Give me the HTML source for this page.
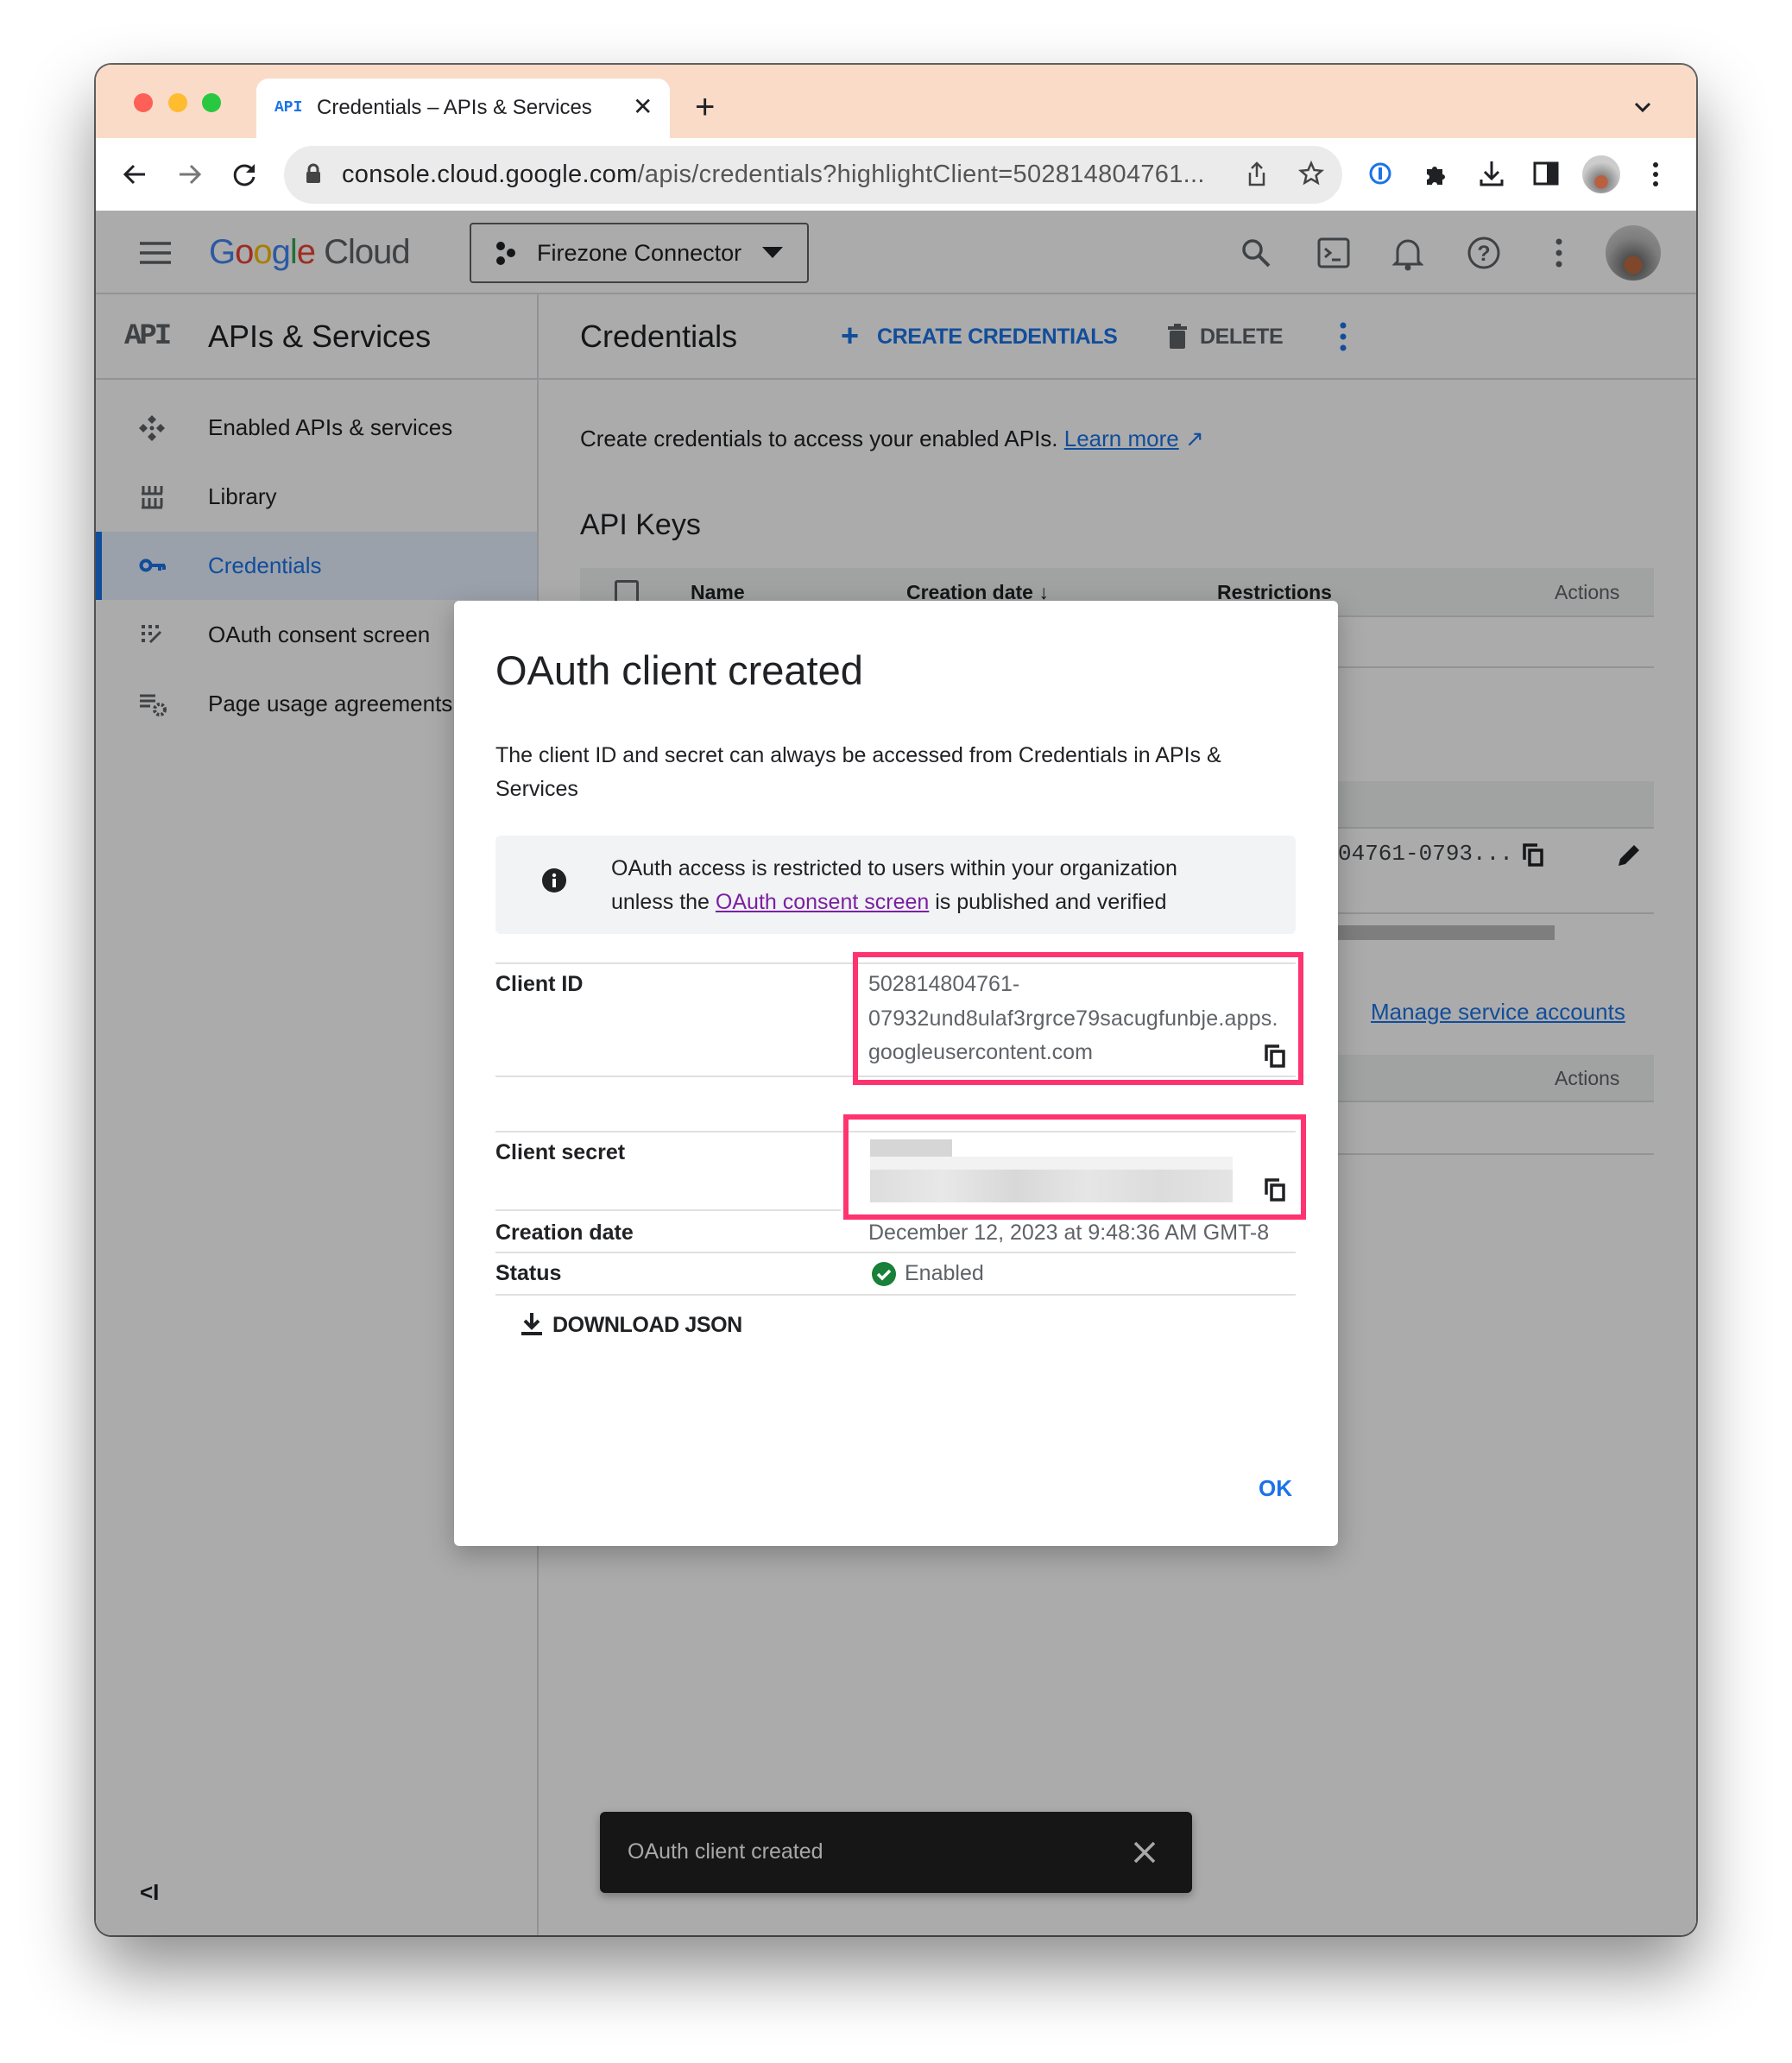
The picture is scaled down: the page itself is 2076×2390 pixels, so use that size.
<!DOCTYPE html>
<html><head><meta charset="utf-8"><style>
*{margin:0;padding:0;box-sizing:border-box}
body{width:2076px;height:2390px;background:#fff;position:relative;overflow:hidden;font-family:"Liberation Sans",Arial,sans-serif;color:#202124}
.a{position:absolute;white-space:nowrap}
.t{position:absolute;white-space:nowrap;line-height:40px}
.win{position:absolute;left:111px;top:75px;width:1854px;height:2167px;border-radius:18px;background:#fff;box-shadow:0 40px 80px rgba(0,0,0,.45),0 0 0 2px rgba(0,0,0,.6);overflow:hidden}
.side{font-size:26px;color:#202124}
.ico{position:absolute}
</style></head><body>
<div class="win"></div>
<!-- tab bar -->
<div class="a" style="left:111px;top:75px;width:1854px;height:85px;background:#fadbc8;border-radius:18px 18px 0 0"></div>
<div class="a" style="left:155px;top:108px;width:22px;height:22px;border-radius:50%;background:#fe5f57"></div>
<div class="a" style="left:195px;top:108px;width:22px;height:22px;border-radius:50%;background:#febc2e"></div>
<div class="a" style="left:234px;top:108px;width:22px;height:22px;border-radius:50%;background:#28c840"></div>
<div class="a" style="left:297px;top:91px;width:479px;height:70px;background:#fff;border-radius:14px 14px 0 0"></div>
<div class="t" style="left:318px;top:105px;font:bold 18px 'Liberation Mono',monospace;line-height:40px;color:#1a73e8">API</div>
<div class="t" style="left:367px;top:105px;font-size:24px;color:#202124">Credentials – APIs &amp; Services</div>
<div class="t" style="left:733px;top:104px;font-size:28px;color:#202124">✕</div>
<div class="t" style="left:805px;top:104px;font-size:40px;color:#202124">+</div>
<svg class="ico" style="left:1890px;top:115px" width="26" height="20"><path d="M5 5l8 8 8-8" stroke="#202124" stroke-width="3" fill="none"/></svg>
<!-- toolbar -->
<div class="a" style="left:111px;top:160px;width:1854px;height:84px;background:#fff"></div>
<svg class="ico" style="left:140px;top:186px" width="32" height="32"><path d="M28 16H6M15 6L5 16l10 10" stroke="#202124" stroke-width="3" fill="none"/></svg>
<svg class="ico" style="left:204px;top:186px" width="32" height="32"><path d="M4 16h22M17 6l10 10-10 10" stroke="#777" stroke-width="3" fill="none"/></svg>
<svg class="ico" style="left:268px;top:186px" width="32" height="32"><path d="M25 12A11 11 0 1 0 26 19" stroke="#202124" stroke-width="3" fill="none"/><path d="M27 4v10H17z" fill="#202124"/></svg>
<div class="a" style="left:329px;top:169px;width:1226px;height:67px;border-radius:34px;background:#ebebeb"></div>
<svg class="ico" style="left:353px;top:188px" width="20" height="26"><rect x="2" y="11" width="16" height="13" rx="2" fill="#444"/><path d="M5 12V8a5 5 0 0 1 10 0v4" stroke="#444" stroke-width="3" fill="none"/></svg>
<div class="t" style="left:396px;top:182px;font-size:29px;letter-spacing:0.3px;color:#202124">console.cloud.google.com<span style="color:#555">/apis/credentials?highlightClient=502814804761...</span></div>
<svg class="ico" style="left:1442px;top:186px" width="28" height="32"><path d="M14 3v16M8 9l6-6 6 6M6 14v14h16V14" stroke="#444" stroke-width="2.5" fill="none"/></svg>
<svg class="ico" style="left:1504px;top:186px" width="30" height="30"><path d="M15 3l3.5 8 8.5.8-6.4 5.6 2 8.4-7.6-4.5-7.6 4.5 2-8.4L3 11.8l8.5-.8z" stroke="#444" stroke-width="2.5" fill="none"/></svg>
<svg class="ico" style="left:1585px;top:187px" width="28" height="28"><circle cx="14" cy="14" r="11" stroke="#1a73e8" stroke-width="3" fill="none"/><rect x="12" y="7" width="4" height="14" fill="#1a73e8"/></svg>
<svg class="ico" style="left:1648px;top:186px" width="30" height="30"><path d="M5 10h6a3 3 0 0 1 6 0h6v6a3 3 0 0 1 0 6v6H17a3 3 0 0 0-6 0H5v-6a3 3 0 0 0 0-6z" fill="#202124"/></svg>
<svg class="ico" style="left:1712px;top:184px" width="32" height="34"><path d="M16 3v20M8 15l8 8 8-8M4 24v6h24v-6" stroke="#202124" stroke-width="3" fill="none"/></svg>
<svg class="ico" style="left:1776px;top:187px" width="30" height="28"><rect x="2" y="2" width="26" height="24" stroke="#202124" stroke-width="3" fill="none"/><rect x="16" y="2" width="12" height="24" fill="#202124"/></svg>
<div class="a" style="left:1833px;top:180px;width:44px;height:44px;border-radius:50%;background:radial-gradient(circle at 50% 70%,#b86040 0 20%,#888 21%,#ccc 60%)"></div>
<svg class="ico" style="left:1912px;top:186px" width="12" height="32"><circle cx="6" cy="5" r="3" fill="#202124"/><circle cx="6" cy="16" r="3" fill="#202124"/><circle cx="6" cy="27" r="3" fill="#202124"/></svg>

<!-- page -->
<div class="a" style="left:111px;top:244px;width:1854px;height:1998px;background:#fff;border-radius:0 0 18px 18px"></div>
<div class="a" style="left:111px;top:339px;width:1854px;height:2px;background:#dadce0"></div>
<div class="a" style="left:111px;top:438px;width:1854px;height:2px;background:#dadce0"></div>
<div class="a" style="left:622px;top:341px;width:2px;height:1901px;background:#dadce0"></div>
<svg class="ico" style="left:160px;top:278px" width="40" height="30"><path d="M2 4h36M2 15h36M2 26h36" stroke="#5f6368" stroke-width="3.5"/></svg>
<div class="t" style="left:242px;top:272px;font-size:40px;letter-spacing:-1px"><span style="color:#4285f4">G</span><span style="color:#ea4335">o</span><span style="color:#fbbc04">o</span><span style="color:#4285f4">g</span><span style="color:#34a853">l</span><span style="color:#ea4335">e</span> <span style="color:#5f6368">Cloud</span></div>
<div class="a" style="left:544px;top:258px;width:393px;height:70px;border:2px solid #5f6368;border-radius:4px"></div>
<svg class="ico" style="left:572px;top:278px" width="30" height="30"><circle cx="8" cy="7" r="5" fill="#202124"/><circle cx="20" cy="15" r="5" fill="#202124"/><circle cx="8" cy="24" r="5" fill="#202124"/></svg>
<div class="t" style="left:622px;top:273px;font-size:27px">Firezone Connector</div>
<svg class="ico" style="left:882px;top:285px" width="26" height="16"><path d="M1 1h24L13 14z" fill="#202124"/></svg>
<svg class="ico" style="left:1436px;top:274px" width="38" height="38"><circle cx="15" cy="15" r="10" stroke="#5f6368" stroke-width="3.5" fill="none"/><path d="M22 22l12 12" stroke="#5f6368" stroke-width="4"/></svg>
<svg class="ico" style="left:1526px;top:274px" width="38" height="38"><rect x="2" y="3" width="34" height="32" rx="3" stroke="#5f6368" stroke-width="3" fill="none"/><path d="M9 14l6 5-6 5M17 27h10" stroke="#5f6368" stroke-width="3" fill="none"/></svg>
<svg class="ico" style="left:1613px;top:272px" width="36" height="42"><path d="M6 31V19a12 12 0 0 1 24 0v12l3 3H3z" stroke="#5f6368" stroke-width="3" fill="none"/><circle cx="18" cy="38" r="3.5" fill="#5f6368"/></svg>
<svg class="ico" style="left:1699px;top:273px" width="40" height="40"><circle cx="20" cy="20" r="17" stroke="#5f6368" stroke-width="3" fill="none"/><text x="20" y="29" text-anchor="middle" font-size="25" font-family="Liberation Sans" font-weight="bold" fill="#5f6368">?</text></svg>
<svg class="ico" style="left:1800px;top:275px" width="12" height="36"><circle cx="6" cy="5" r="3.5" fill="#5f6368"/><circle cx="6" cy="18" r="3.5" fill="#5f6368"/><circle cx="6" cy="31" r="3.5" fill="#5f6368"/></svg>
<div class="a" style="left:1860px;top:261px;width:64px;height:64px;border-radius:50%;background:radial-gradient(circle at 50% 72%,#c06a40 0 18%,#777 19%,#bbb 55%,#ddd)"></div>

<div class="t" style="left:144px;top:370px;font:bold 34px 'Liberation Mono',monospace;line-height:40px;color:#5f6368;letter-spacing:-3px">API</div>
<div class="t" style="left:241px;top:370px;font-size:36px">APIs &amp; Services</div>
<div class="t" style="left:672px;top:370px;font-size:36px">Credentials</div>
<div class="t" style="left:974px;top:369px;font-size:36px;color:#1a73e8;font-weight:bold">+</div>
<div class="t" style="left:1016px;top:370px;font-size:25px;letter-spacing:-0.4px;color:#1a73e8;font-weight:bold">CREATE CREDENTIALS</div>
<svg class="ico" style="left:1352px;top:375px" width="24" height="30"><rect x="3" y="8" width="18" height="21" rx="2" fill="#5f6368"/><rect x="1" y="3" width="22" height="4" fill="#5f6368"/><rect x="8" y="0" width="8" height="4" fill="#5f6368"/></svg>
<div class="t" style="left:1390px;top:370px;font-size:25px;letter-spacing:-0.4px;color:#5f6368;font-weight:bold">DELETE</div>
<svg class="ico" style="left:1550px;top:372px" width="12" height="36"><circle cx="6" cy="5" r="3.5" fill="#1a73e8"/><circle cx="6" cy="18" r="3.5" fill="#1a73e8"/><circle cx="6" cy="31" r="3.5" fill="#1a73e8"/></svg>

<!-- sidebar -->
<div class="a" style="left:111px;top:616px;width:511px;height:79px;background:#e8f0fe"></div>
<div class="a" style="left:111px;top:616px;width:7px;height:79px;background:#1a73e8"></div>
<svg class="ico" style="left:160px;top:480px" width="32" height="32"><path d="M16 1l5 5-5 5-5-5zM16 21l5 5-5 5-5-5zM1 16l5-5 5 5-5 5zM21 16l5-5 5 5-5 5z" fill="#5f6368"/><circle cx="16" cy="16" r="2.5" fill="#5f6368"/></svg>
<div class="t side" style="left:241px;top:475px">Enabled APIs &amp; services</div>
<svg class="ico" style="left:163px;top:561px" width="26" height="30"><path d="M3 2v8M10 2v8M17 2v8M24 2v8M1 11h24M3 16v10M10 16v10M17 16v10M24 16v10M1 27h24" stroke="#5f6368" stroke-width="3"/></svg>
<div class="t side" style="left:241px;top:555px">Library</div>
<svg class="ico" style="left:161px;top:645px" width="32" height="20"><circle cx="8" cy="10" r="5.5" stroke="#1a73e8" stroke-width="4" fill="none"/><path d="M14 10h16M24 10v6M29 10v5" stroke="#1a73e8" stroke-width="4"/></svg>
<div class="t side" style="left:241px;top:635px;color:#1a73e8">Credentials</div>
<svg class="ico" style="left:163px;top:723px" width="26" height="24"><rect x="1" y="1" width="4" height="4" fill="#5f6368"/><rect x="9" y="1" width="4" height="4" fill="#5f6368"/><rect x="17" y="1" width="4" height="4" fill="#5f6368"/><rect x="1" y="9" width="4" height="4" fill="#5f6368"/><rect x="9" y="9" width="4" height="4" fill="#5f6368"/><rect x="1" y="17" width="4" height="4" fill="#5f6368"/><path d="M11 21l12-12" stroke="#5f6368" stroke-width="3"/></svg>
<div class="t side" style="left:241px;top:715px">OAuth consent screen</div>
<svg class="ico" style="left:161px;top:803px" width="34" height="28"><path d="M1 3h18M1 9h18M1 15h12" stroke="#5f6368" stroke-width="3"/><circle cx="24" cy="19" r="6" stroke="#5f6368" stroke-width="4" stroke-dasharray="3 2" fill="none"/></svg>
<div class="t side" style="left:241px;top:795px">Page usage agreements</div>
<div class="t" style="left:162px;top:2172px;font-size:26px;font-weight:bold">&lt;I</div>

<!-- main -->
<div class="t" style="left:672px;top:488px;font-size:26px">Create credentials to access your enabled APIs. <span style="color:#1a73e8;text-decoration:underline">Learn more</span> <span style="color:#1a73e8">↗</span></div>
<div class="t" style="left:672px;top:588px;font-size:34px">API Keys</div>
<div class="a" style="left:672px;top:658px;width:1244px;height:57px;background:#f1f3f4;border-bottom:2px solid #dadce0"></div>
<div class="a" style="left:712px;top:672px;width:28px;height:28px;border:3px solid #5f6368;border-radius:3px"></div>
<div class="t" style="left:800px;top:666px;font-size:23px;font-weight:bold">Name</div>
<div class="t" style="left:1050px;top:666px;font-size:23px;font-weight:bold">Creation date ↓</div>
<div class="t" style="left:1410px;top:666px;font-size:23px;font-weight:bold">Restrictions</div>
<div class="t" style="left:1801px;top:666px;font-size:23px;color:#5f6368">Actions</div>
<div class="a" style="left:672px;top:772px;width:1244px;height:2px;background:#dadce0"></div>
<div class="a" style="left:672px;top:905px;width:1244px;height:55px;background:#f1f3f4;border-bottom:2px solid #dadce0"></div>
<div class="t" style="left:1550px;top:969px;font:26px 'Liberation Mono',monospace;line-height:40px;color:#3c4043">04761-0793...</div>
<svg class="ico" style="left:1763px;top:976px" width="26" height="28"><path d="M3 20V3h15" stroke="#202124" stroke-width="3.5" fill="none"/><rect x="9" y="9" width="14" height="17" stroke="#202124" stroke-width="3.5" fill="none"/></svg>
<svg class="ico" style="left:1873px;top:975px" width="30" height="30"><path d="M2 28l2-8L20 4l6 6-16 16z" fill="#202124"/></svg>
<div class="a" style="left:672px;top:1057px;width:1244px;height:2px;background:#dadce0"></div>
<div class="a" style="left:1500px;top:1072px;width:301px;height:17px;background:#bdbdbd"></div>
<div class="t" style="left:1588px;top:1152px;font-size:26px;color:#1a73e8;text-decoration:underline">Manage service accounts</div>
<div class="a" style="left:672px;top:1222px;width:1244px;height:55px;background:#f1f3f4;border-bottom:2px solid #dadce0"></div>
<div class="t" style="left:1801px;top:1229px;font-size:23px;color:#5f6368">Actions</div>
<div class="a" style="left:672px;top:1336px;width:1244px;height:2px;background:#dadce0"></div>

<!-- overlay -->
<div class="a" style="left:111px;top:244px;width:1854px;height:1998px;background:rgba(0,0,0,.33);border-radius:0 0 18px 18px"></div>

<!-- snackbar -->
<div class="a" style="left:695px;top:2099px;width:686px;height:94px;background:#161616;border-radius:6px;box-shadow:0 4px 10px rgba(0,0,0,.3)"></div>
<div class="t" style="left:727px;top:2125px;font-size:25px;color:#a8a8a8">OAuth client created</div>
<svg class="ico" style="left:1312px;top:2132px" width="28" height="28"><path d="M3 3l22 22M25 3L3 25" stroke="#a8a8a8" stroke-width="3.5"/></svg>

<!-- dialog -->
<div class="a" style="left:526px;top:696px;width:1024px;height:1095px;background:#fff;border-radius:6px;box-shadow:0 10px 30px rgba(0,0,0,.25)"></div>
<div class="t" style="left:574px;top:752px;font-size:47px;line-height:50px">OAuth client created</div>
<div class="t" style="left:574px;top:855px;font-size:25px">The client ID and secret can always be accessed from Credentials in APIs &amp;</div>
<div class="t" style="left:574px;top:894px;font-size:25px">Services</div>
<div class="a" style="left:574px;top:968px;width:927px;height:114px;background:#f1f3f4;border-radius:6px"></div>
<svg class="ico" style="left:627px;top:1005px" width="30" height="30"><circle cx="15" cy="15" r="14" fill="#202124"/><rect x="13" y="13" width="4" height="10" fill="#fff"/><circle cx="15" cy="9" r="2.2" fill="#fff"/></svg>
<div class="t" style="left:708px;top:986px;font-size:25px">OAuth access is restricted to users within your organization</div>
<div class="t" style="left:708px;top:1025px;font-size:25px">unless the <span style="color:#7b1fa2;text-decoration:underline">OAuth consent screen</span> is published and verified</div>
<div class="a" style="left:574px;top:1115px;width:927px;height:2px;background:#e0e0e0"></div>
<div class="t" style="left:574px;top:1120px;font-size:25px;font-weight:bold">Client ID</div>
<div class="t" style="left:1006px;top:1120px;font-size:25px;color:#5f6368">502814804761-</div>
<div class="t" style="left:1006px;top:1160px;font-size:25px;color:#5f6368;letter-spacing:0.2px">07932und8ulaf3rgrce79sacugfunbje.apps.</div>
<div class="t" style="left:1006px;top:1199px;font-size:25px;color:#5f6368">googleusercontent.com</div>
<svg class="ico" style="left:1464px;top:1209px" width="26" height="28"><path d="M3 20V3h15" stroke="#202124" stroke-width="3.5" fill="none"/><rect x="9" y="9" width="14" height="17" stroke="#202124" stroke-width="3.5" fill="none"/></svg>
<div class="a" style="left:574px;top:1246px;width:927px;height:2px;background:#e0e0e0"></div>
<div class="a" style="left:988px;top:1103px;width:522px;height:154px;border:6px solid #ff3370"></div>
<div class="a" style="left:574px;top:1310px;width:927px;height:2px;background:#e0e0e0"></div>
<div class="t" style="left:574px;top:1315px;font-size:25px;font-weight:bold">Client secret</div>
<div class="a" style="left:1008px;top:1320px;width:95px;height:20px;background:#d6d6d6"></div>
<div class="a" style="left:1008px;top:1340px;width:420px;height:15px;background:#f2f2f2"></div>
<div class="a" style="left:1008px;top:1355px;width:420px;height:38px;background:linear-gradient(90deg,#ddd,#e8e8e8 20%,#d8d8d8 40%,#e6e6e6 60%,#dcdcdc 80%,#e4e4e4)"></div>
<svg class="ico" style="left:1464px;top:1364px" width="26" height="28"><path d="M3 20V3h15" stroke="#202124" stroke-width="3.5" fill="none"/><rect x="9" y="9" width="14" height="17" stroke="#202124" stroke-width="3.5" fill="none"/></svg>
<div class="a" style="left:977px;top:1291px;width:536px;height:122px;border:6px solid #ff3370"></div>
<div class="a" style="left:574px;top:1401px;width:400px;height:2px;background:#e0e0e0"></div>
<div class="t" style="left:574px;top:1408px;font-size:25px;font-weight:bold">Creation date</div>
<div class="t" style="left:1006px;top:1408px;font-size:25px;color:#5f6368">December 12, 2023 at 9:48:36 AM GMT-8</div>
<div class="a" style="left:574px;top:1450px;width:927px;height:2px;background:#e0e0e0"></div>
<div class="t" style="left:574px;top:1455px;font-size:25px;font-weight:bold">Status</div>
<svg class="ico" style="left:1009px;top:1461px" width="30" height="30"><circle cx="15" cy="15" r="14" fill="#188038"/><path d="M8 15l5 5 9-9" stroke="#fff" stroke-width="3.5" fill="none"/></svg>
<div class="t" style="left:1048px;top:1455px;font-size:25px;color:#5f6368">Enabled</div>
<div class="a" style="left:574px;top:1499px;width:927px;height:2px;background:#e0e0e0"></div>
<svg class="ico" style="left:602px;top:1519px" width="28" height="30"><path d="M14 2v16M6 11l8 8 8-8" stroke="#202124" stroke-width="4" fill="none"/><rect x="2" y="24" width="24" height="4" fill="#202124"/></svg>
<div class="t" style="left:640px;top:1515px;font-size:25px;letter-spacing:-0.4px;font-weight:bold">DOWNLOAD JSON</div>
<div class="t" style="left:1458px;top:1704px;font-size:26px;font-weight:bold;color:#1a73e8">OK</div>
</body></html>
